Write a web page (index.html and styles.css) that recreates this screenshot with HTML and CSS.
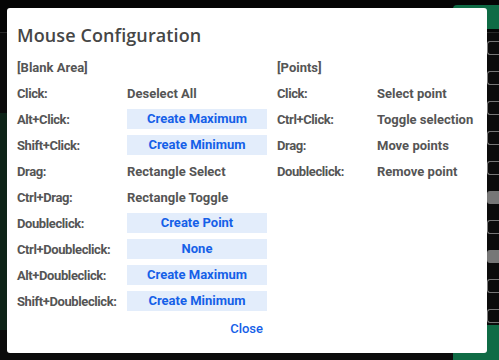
FILE: index.html
```html
<!DOCTYPE html>
<html>
<head>
<meta charset="utf-8">
<link rel="stylesheet" href="styles.css">
</head>
<body>
<div class="app">
  <div class="topbar"><div class="tb-btn"></div></div>
  <div class="main">
    <div class="left-strip"></div>
    <div class="spacer"></div>
    <div class="side">
      <div class="chk"></div><div class="chk"></div><div class="chk"></div><div class="chk"></div>
      <div class="chk"></div><div class="sq"></div><div class="chk"></div><div class="sq"></div>
      <div class="chk"></div><div class="chk"></div>
    </div>
  </div>
  <div class="bottom-btn"></div>
</div>

<div class="dialog">
  <h1 class="title">Mouse Configuration</h1>
  <div class="cols">
    <div class="col col-left">
      <div class="row head">[Blank Area]</div>
      <div class="row"><span class="k">Click:</span><span class="v">Deselect All</span></div>
      <div class="row"><span class="k">Alt+Click:</span><span class="v btn">Create Maximum</span></div>
      <div class="row"><span class="k">Shift+Click:</span><span class="v btn">Create Minimum</span></div>
      <div class="row"><span class="k">Drag:</span><span class="v">Rectangle Select</span></div>
      <div class="row"><span class="k">Ctrl+Drag:</span><span class="v">Rectangle Toggle</span></div>
      <div class="row"><span class="k">Doubleclick:</span><span class="v btn">Create Point</span></div>
      <div class="row"><span class="k">Ctrl+Doubleclick:</span><span class="v btn">None</span></div>
      <div class="row"><span class="k">Alt+Doubleclick:</span><span class="v btn">Create Maximum</span></div>
      <div class="row"><span class="k">Shift+Doubleclick:</span><span class="v btn">Create Minimum</span></div>
      <div class="close-row"><a class="close">Close</a></div>
    </div>
    <div class="col col-right">
      <div class="row head">[Points]</div>
      <div class="row"><span class="k">Click:</span><span class="v">Select point</span></div>
      <div class="row"><span class="k">Ctrl+Click:</span><span class="v">Toggle selection</span></div>
      <div class="row"><span class="k">Drag:</span><span class="v">Move points</span></div>
      <div class="row"><span class="k">Doubleclick:</span><span class="v">Remove point</span></div>
    </div>
  </div>
</div>
</body>
</html>
```
FILE: styles.css
```css
html, body {
  margin: 0;
  padding: 0;
  width: 499px;
  height: 360px;
  overflow: hidden;
  background: #0b0b0b;
  font-family: Roboto, "Liberation Sans", sans-serif;
}

.app {
  width: 499px;
  height: 360px;
  display: flex;
  flex-direction: column;
}

.topbar {
  height: 32px;
  display: flex;
  justify-content: flex-end;
  align-items: flex-start;
  border-bottom: 1px solid #2a2a2a;
  background: #050505;
}

.tb-btn {
  width: 46px;
  height: 24px;
  margin-top: 5px;
  background: #0f6b45;
  border-radius: 4px 0 0 4px;
}

.main {
  flex: 1;
  display: flex;
}

.left-strip {
  width: 7px;
  margin-top: 80px;
  margin-bottom: 30px;
  background: #0e2418;
}

.spacer { flex: 1; }

.side {
  width: 12px;
  display: flex;
  flex-direction: column;
  gap: 16px;
  padding-top: 8px;
}

.chk {
  height: 12px;
  border: 1px solid #777;
  border-right: none;
  border-radius: 3px 0 0 3px;
}

.sq {
  height: 13px;
  background: #777;
  border-radius: 3px 0 0 3px;
}

.bottom-btn {
  position: absolute;
  right: 0;
  top: 325px;
  width: 46px;
  height: 40px;
  background: #0f6b45;
  border-radius: 4px 0 0 0;
}

.dialog {
  position: absolute;
  left: 7px;
  top: 8px;
  width: 480px;
  height: 345px;
  box-sizing: border-box;
  background: #ffffff;
  border-radius: 3px;
  padding: 15px 10px 0 10px;
}

.title {
  margin: 0 0 10px 0;
  font-family: "Open Sans", sans-serif;
  font-weight: 600;
  font-size: 18px;
  letter-spacing: 0.1px;
  line-height: 24px;
  color: #464646;
}

.cols {
  display: flex;
  gap: 10px;
}

.col {
  display: flex;
  flex-direction: column;
  gap: 6px;
}

.col-left { width: 250px; }
.col-right { width: 200px; }

.row {
  display: flex;
  height: 20px;
  align-items: center;
  font-size: 13px;
  font-weight: 700;
  color: #555555;
}

.k {
  width: 110px;
  white-space: nowrap;
  letter-spacing: -0.4px;
}
.col-right .k { width: 100px; }

.v { white-space: nowrap; }

.btn {
  width: 140px;
  height: 20px;
  line-height: 20px;
  text-align: center;
  background: #e3edfb;
  color: #1560e8;
}

.close-row {
  display: flex;
  justify-content: flex-end;
  padding-right: 4px;
  height: 20px;
  align-items: center;
  margin-top: 1px;
}

.close {
  font-size: 13px;
  font-weight: 500;
  color: #1560e8;
}
```
